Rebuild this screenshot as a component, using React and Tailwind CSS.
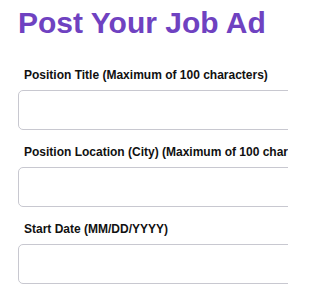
import React from "react";

const fields = [
  "Position Title (Maximum of 100 characters)",
  "Position Location (City) (Maximum of 100 characters)",
  "Start Date (MM/DD/YYYY)",
];

const App = () => {
  return (
    <div className="w-[288px] h-[288px] overflow-hidden bg-white font-['Liberation_Sans',Arial,sans-serif]">
      <div className="w-[420px] pl-[18px] pt-[5px]">
        <h1 className="text-[30px] leading-[36px] font-bold text-[#6f42c1]">
          Post Your Job Ad
        </h1>
        <div className="mt-[27px] flex flex-col gap-[15px]">
          {fields.map((label) => (
            <div key={label}>
              <label className="block pl-[6px] mb-[8px] text-[12px] leading-[14px] font-bold text-[#111] whitespace-nowrap">
                {label}
              </label>
              <input
                type="text"
                className="block w-full h-[40px] rounded-[5px] border border-[#c8c8d0] bg-white"
              />
            </div>
          ))}
        </div>
      </div>
    </div>
  );
};

export default App;
